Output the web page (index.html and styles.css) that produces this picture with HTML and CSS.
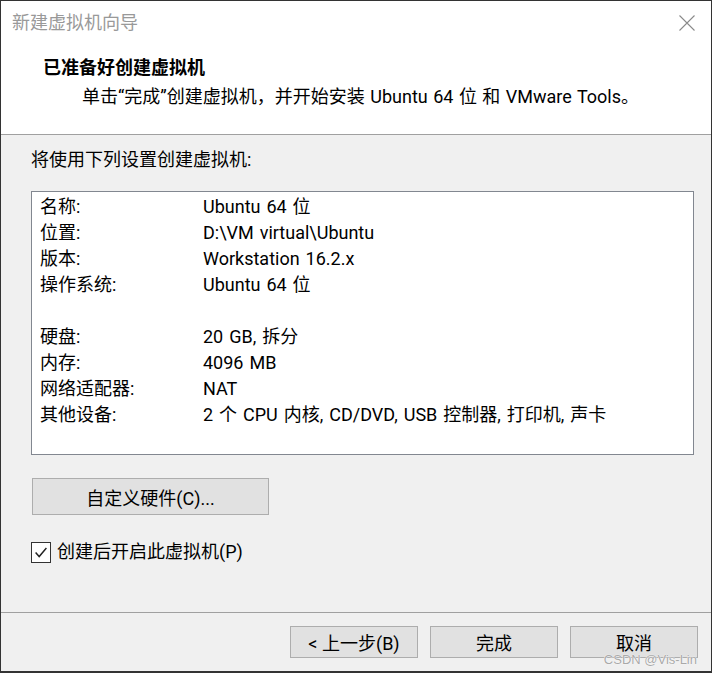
FILE: index.html
```html
<!DOCTYPE html>
<html lang="zh-CN">
<head>
<meta charset="utf-8">
<title>新建虚拟机向导</title>
<link rel="stylesheet" href="styles.css">
</head>
<body>
<div class="window">
  <div class="header">
    <div class="titlebar">
      <span class="title">新建虚拟机向导</span>
      <svg class="close" width="16" height="16" viewBox="0 0 16 16"><path d="M0.5 0.5 L15.5 15.5 M15.5 0.5 L0.5 15.5" stroke="#8a8a8a" stroke-width="1.1" fill="none"/></svg>
    </div>
    <div class="heading">已准备好创建虚拟机</div>
    <div class="subtitle">单击“完成”创建虚拟机，并开始安装 Ubuntu 64 位 和 VMware Tools。</div>
  </div>
  <div class="body">
    <div class="intro">将使用下列设置创建虚拟机:</div>
    <div class="listbox">
      <div class="row"><span class="label">名称:</span><span class="value">Ubuntu 64 位</span></div>
      <div class="row"><span class="label">位置:</span><span class="value">D:\VM virtual\Ubuntu</span></div>
      <div class="row"><span class="label">版本:</span><span class="value">Workstation 16.2.x</span></div>
      <div class="row"><span class="label">操作系统:</span><span class="value">Ubuntu 64 位</span></div>
      <div class="row"></div>
      <div class="row"><span class="label">硬盘:</span><span class="value">20 GB, 拆分</span></div>
      <div class="row"><span class="label">内存:</span><span class="value">4096 MB</span></div>
      <div class="row"><span class="label">网络适配器:</span><span class="value">NAT</span></div>
      <div class="row"><span class="label">其他设备:</span><span class="value">2 个 CPU 内核, CD/DVD, USB 控制器, 打印机, 声卡</span></div>
    </div>
    <div class="btn custom">自定义硬件(C)...</div>
    <div class="check-row">
      <span class="checkbox"><svg width="20" height="21" viewBox="0 0 20 21"><path d="M4 10.5 L8 15 L16 5.5" stroke="#222" stroke-width="1.6" fill="none"/></svg></span>
      <span class="check-label">创建后开启此虚拟机(P)</span>
    </div>
  </div>
  <div class="footer">
    <div class="btn nav">&lt; 上一步(B)</div>
    <div class="btn nav">完成</div>
    <div class="btn nav">取消</div>
  </div>
  <div class="watermark">CSDN @Vis-Lin</div>
</div>
</body>
</html>
```
FILE: styles.css
```css
html, body {
  margin: 0;
  padding: 0;
}
body {
  font-family: Roboto, "Noto Sans CJK SC", sans-serif;
  font-size: 18px;
  color: #000;
}
.window {
  position: relative;
  width: 712px;
  height: 673px;
  box-sizing: border-box;
  border: 1px solid #333;
  border-bottom-width: 2px;
  background: #f0f0f0;
  display: flex;
  flex-direction: column;
}
.header {
  background: #fff;
  height: 133px;
  border-bottom: 1px solid #a0a0a0;
}
.titlebar {
  height: 44px;
  display: flex;
  align-items: center;
  justify-content: space-between;
  padding: 0 16px 0 11px;
}
.title {
  color: #999;
  line-height: 44px;
}
.close {
  display: block;
}
.heading {
  font-weight: bold;
  line-height: 26px;
  margin-top: 10px;
  padding-left: 42px;
}
.subtitle {
  line-height: 26px;
  margin-top: 3px;
  padding-left: 81px;
  word-spacing: 1px;
}
.body {
  flex: 1;
  padding: 12px 17px 0 30px;
}
.intro {
  line-height: 26px;
}
.listbox {
  margin-top: 18px;
  height: 264px;
  box-sizing: border-box;
  border: 1px solid #828790;
  background: #fff;
  padding: 2px 0 0 8px;
}
.row {
  display: flex;
  height: 26px;
  line-height: 26px;
}
.label {
  width: 163px;
}
.value {
  word-spacing: 1.5px;
}
.btn {
  box-sizing: border-box;
  background: #e1e1e1;
  border: 1px solid #adadad;
  display: flex;
  align-items: center;
  justify-content: center;
}
.custom {
  margin-top: 23px;
  margin-left: 1px;
  width: 237px;
  height: 37px;
}
.check-row {
  margin-top: 26px;
  display: flex;
  align-items: center;
  height: 22px;
}
.checkbox {
  width: 20px;
  height: 21px;
  box-sizing: border-box;
  border: 1px solid #333;
  background: #fff;
  display: flex;
  align-items: center;
  justify-content: center;
}
.checkbox svg {
  display: block;
}
.check-label {
  margin-left: 6px;
  line-height: 22px;
}
.footer {
  height: 45px;
  border-top: 1px solid #a0a0a0;
  display: flex;
  justify-content: flex-end;
  align-items: flex-start;
  gap: 12px;
  padding: 13px 13px 0 0;
}
.nav {
  width: 128px;
  height: 32px;
}
.watermark {
  position: absolute;
  right: 14px;
  bottom: 4px;
  font-family: "Liberation Sans", sans-serif;
  font-size: 13px;
  color: #a9a9a9;
  text-shadow: 0 0 1px #fff, 0 0 1px #fff;
}
```
